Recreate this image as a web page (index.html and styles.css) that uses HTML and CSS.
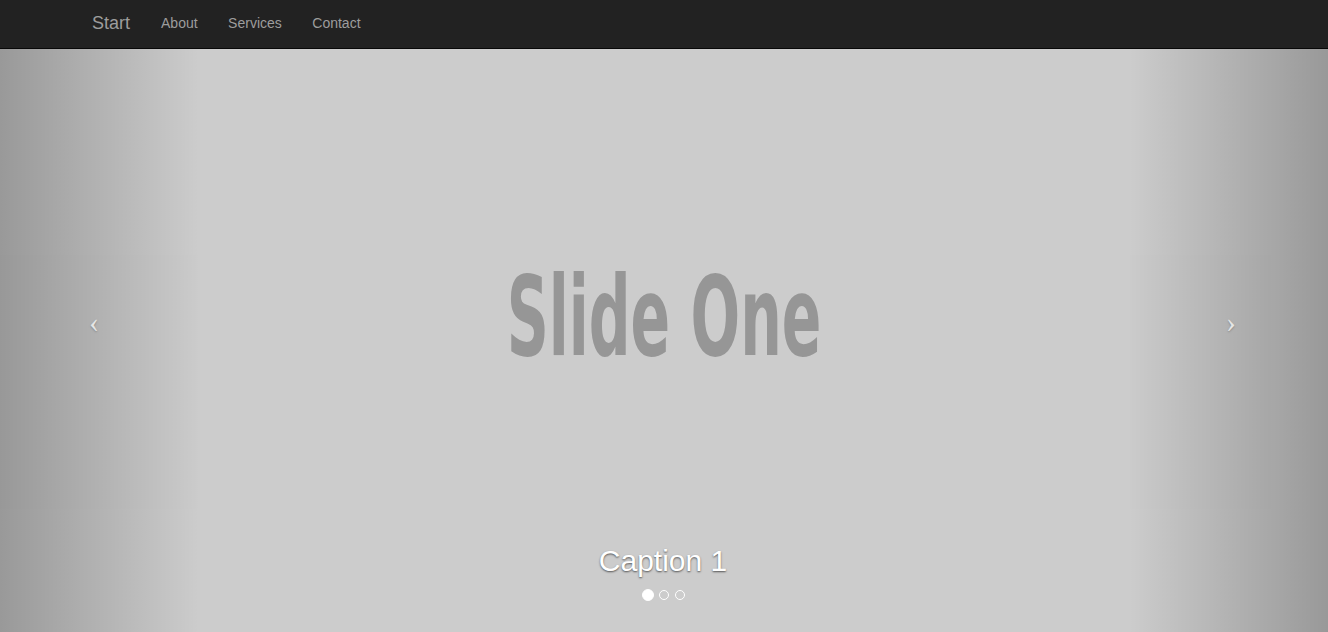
FILE: index.html
```html
<!DOCTYPE html>
<html lang="en">
<head>
<meta charset="utf-8">
<title>Full Slider</title>
<link rel="stylesheet" href="styles.css">
</head>
<body>
<div class="page">
  <nav class="navbar">
    <div class="container">
      <a class="brand" href="#">Start</a>
      <ul class="nav">
        <li><a href="#">About</a></li>
        <li><a href="#">Services</a></li>
        <li><a href="#">Contact</a></li>
      </ul>
    </div>
  </nav>
  <header class="carousel">
    <div class="slide">
      <div class="slide-title">Slide One</div>
    </div>
    <a class="control control-left" href="#"><span class="icon-prev">&lsaquo;</span></a>
    <a class="control control-right" href="#"><span class="icon-next">&rsaquo;</span></a>
    <div class="caption-wrap">
      <h2 class="caption">Caption 1</h2>
      <ol class="indicators">
        <li class="dot active"></li>
        <li class="dot"></li>
        <li class="dot"></li>
      </ol>
    </div>
  </header>
</div>
</body>
</html>
```
FILE: styles.css
```css
* { box-sizing: border-box; }
html, body { margin: 0; padding: 0; height: 100%; }
body {
  font-family: "Liberation Sans", Arial, sans-serif;
  background: #ccc;
  overflow: hidden;
}
.page {
  display: flex;
  flex-direction: column;
  height: 632px;
}
.navbar {
  height: 49px;
  flex: 0 0 49px;
  background: #222;
  border-bottom: 1px solid #080808;
}
.container {
  width: 1170px;
  margin: 0 auto;
  padding: 0 13px 2px;
  display: flex;
  align-items: center;
  height: 48px;
}
.brand {
  color: #9d9d9d;
  font-size: 18px;
  text-decoration: none;
  line-height: 20px;
  padding-right: 16px;
}
.nav {
  list-style: none;
  margin: 0;
  padding: 0;
  display: flex;
}
.nav a {
  display: block;
  padding: 0 15.5px 0 15px;
  color: #9d9d9d;
  font-size: 14px;
  line-height: 20px;
  text-decoration: none;
}
.carousel {
  position: relative;
  flex: 1;
  overflow: hidden;
  background: #ccc;
}
.slide {
  height: 100%;
  display: flex;
  align-items: center;
  justify-content: center;
  padding-bottom: 48px;
}
.slide-title {
  font-family: "DejaVu Sans", sans-serif;
  font-stretch: condensed;
  font-size: 111px;
  line-height: 1;
  font-weight: bold;
  color: #969696;
  transform: scaleX(0.585);
  white-space: nowrap;
}
.control {
  position: absolute;
  top: 0;
  bottom: 0;
  width: 15%;
  opacity: 0.5;
  color: #fff;
  text-decoration: none;
  display: flex;
  align-items: center;
  justify-content: center;
  text-shadow: 0 1px 2px rgba(0,0,0,.6);
}
.control-left {
  left: 0;
  background-image: linear-gradient(to right, rgba(0,0,0,.5) 0, rgba(0,0,0,.0001) 100%);
}
.control-right {
  right: 0;
  background-image: linear-gradient(to right, rgba(0,0,0,.0001) 0, rgba(0,0,0,.5) 100%);
}
.icon-prev, .icon-next {
  font-family: "Liberation Serif", serif;
  font-size: 30px;
  line-height: 1;
  margin-bottom: 38px;
}
.icon-prev { margin-right: 11px; }
.icon-next { margin-left: 5px; }
.caption-wrap {
  position: absolute;
  left: 0;
  right: 0;
  bottom: 31px;
  display: flex;
  flex-direction: column;
  align-items: center;
}
.caption {
  margin: 0 0 0 -2px;
  font-size: 30px;
  font-weight: normal;
  line-height: 33px;
  color: #fff;
  text-shadow: 0 1px 2px rgba(0,0,0,.6);
}
.indicators {
  list-style: none;
  margin: 12px 0 0;
  padding: 0;
  height: 12px;
  display: flex;
  align-items: center;
  gap: 4px;
}
.dot {
  width: 10px;
  height: 10px;
  border: 1px solid #fff;
  border-radius: 50%;
  margin: 1px;
}
.dot.active {
  width: 12px;
  height: 12px;
  margin: 0;
  background: #fff;
}
```
